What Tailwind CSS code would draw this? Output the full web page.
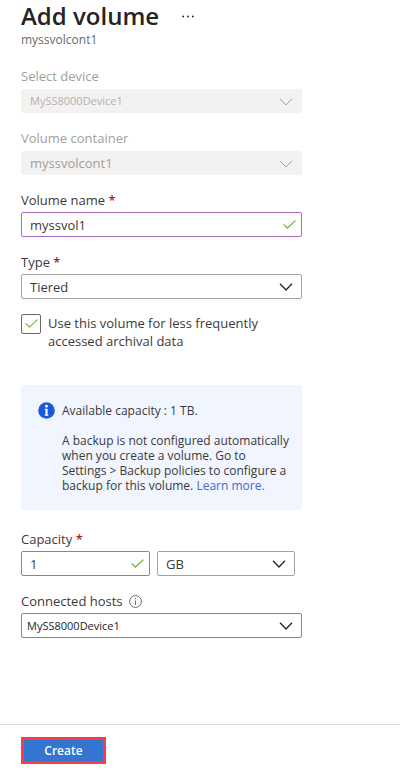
<!DOCTYPE html>
<html lang="en">
<head>
<meta charset="utf-8">
<meta name="viewport" content="width=device-width, initial-scale=1">
<title>Add volume</title>
<script src="https://cdn.jsdelivr.net/npm/@tailwindcss/browser@4"></script>
</head>
<body class="flex min-h-screen flex-col bg-white font-['Open_Sans','Noto_Sans',sans-serif] text-[13px] leading-5 text-[#3b3a39]">
<header class="px-[21px]">
  <div class="flex items-center gap-[23px]">
    <h1 class="text-2xl leading-8 font-semibold text-[#252423]">Add volume</h1>
    <button type="button" aria-label="More actions" class="flex h-5 items-center text-[#252423]">
      <svg class="h-[3px] w-3" viewBox="0 0 12 3" fill="currentColor"><circle cx="1.2" cy="1.5" r=".9"/><circle cx="6" cy="1.5" r=".9"/><circle cx="10.8" cy="1.5" r=".9"/></svg>
    </button>
  </div>
  <p class="text-xs leading-4 text-[#6b6a68]">myssvolcont1</p>
</header>

<main class="px-[21px] pt-[18px]">
  <form id="volume" class="w-full max-w-[281px]">
    <div class="flex flex-col gap-[15px]">
      <div>
        <label for="device" class="block text-[#a19f9d]">Select device</label>
        <div class="relative mt-[3px]">
          <select id="device" disabled class="block h-6 w-full appearance-none rounded-xs bg-[#f3f2f1] px-[9px] text-[11px] text-[#b3b0ad] opacity-100"><option>MySS8000Device1</option></select>
          <svg class="pointer-events-none absolute top-[9px] right-[9px] h-2 w-[14px] text-[#a19f9d]" viewBox="0 0 14 8" fill="none" stroke="currentColor"><path d="M1 .8 7 7 13 .8"/></svg>
        </div>
      </div>
      <div>
        <label for="container" class="block text-[#a19f9d]">Volume container</label>
        <div class="relative mt-[3px]">
          <select id="container" disabled class="block h-6 w-full appearance-none rounded-xs bg-[#f3f2f1] px-[9px] text-[#a19f9d] opacity-100"><option>myssvolcont1</option></select>
          <svg class="pointer-events-none absolute top-[9px] right-[9px] h-2 w-[14px] text-[#a19f9d]" viewBox="0 0 14 8" fill="none" stroke="currentColor"><path d="M1 .8 7 7 13 .8"/></svg>
        </div>
      </div>
      <div>
        <label for="name" class="block">Volume name <span class="font-semibold text-[#a4262c]">*</span></label>
        <div class="relative mt-[2px]">
          <input id="name" type="text" value="myssvol1" class="block h-[25px] w-full rounded-xs border border-[#a56cc1] bg-white px-2">
          <svg class="pointer-events-none absolute top-2 right-[6px] h-[9px] w-[13px] text-[#6bb03c]" viewBox="0 0 13 9" fill="none" stroke="currentColor" stroke-width="1.3"><path d="M.6 4.4 4.4 8.1 12.4.6"/></svg>
        </div>
      </div>
      <div>
        <label for="type" class="block">Type <span class="font-semibold text-[#a4262c]">*</span></label>
        <div class="relative mt-[2px]">
          <select id="type" class="block h-[25px] w-full appearance-none rounded-xs border border-[#a3a2a0] bg-white px-2"><option>Tiered</option></select>
          <svg class="pointer-events-none absolute top-[9px] right-[9px] h-2 w-[14px] text-[#252423]" viewBox="0 0 14 8" fill="none" stroke="currentColor" stroke-width="1.3"><path d="M1 .8 7 7 13 .8"/></svg>
        </div>
      </div>
      <div class="flex items-start gap-[7px]">
        <div class="relative shrink-0">
          <input id="archival" type="checkbox" checked class="block h-5 w-5 appearance-none rounded-xs border border-[#6b6a68] bg-white">
          <svg class="pointer-events-none absolute top-[5px] left-1 h-[9px] w-[13px] text-[#6bb03c]" viewBox="0 0 13 9" fill="none" stroke="currentColor" stroke-width="1.1"><path d="M.6 4.4 4.4 8.1 12.4.6"/></svg>
        </div>
        <label for="archival" class="leading-[18px]">Use this volume for less frequently<br>accessed archival data</label>
      </div>
    </div>

    <section class="mt-[35px] flex items-start gap-[7px] rounded-xs bg-[#f0f5ff] py-[17px] pr-2 pl-[17px] text-xs leading-[15px]">
      <svg class="h-[17px] w-[17px] shrink-0" viewBox="0 0 17 17"><circle cx="8.5" cy="8.5" r="8.3" fill="#1b5adb"/><circle cx="8.5" cy="4.2" r="1.4" fill="#fff"/><path d="M6.8 6.7h2.8v6h.8v1.1H6.6v-1.1h.9V7.8h-.7z" fill="#fff"/></svg>
      <div class="pt-px">
        <p>Available capacity : 1 TB.</p>
        <p class="mt-[15px]">A backup is not configured automatically<br>when you create a volume. Go to<br>Settings &gt; Backup policies to configure a<br>backup for this volume. <a href="#" class="text-[#4668c5]">Learn more.</a></p>
      </div>
    </section>

    <div class="mt-[19px]">
      <label for="capacity" class="block">Capacity <span class="font-semibold text-[#a4262c]">*</span></label>
      <div class="mt-[2px] flex gap-[7px] pr-[7px]">
        <div class="relative flex-[129]">
          <input id="capacity" type="text" value="1" class="block h-[25px] w-full rounded-xs border border-[#a56cc1] bg-white px-2">
          <svg class="pointer-events-none absolute top-2 right-[6px] h-[9px] w-[13px] text-[#6bb03c]" viewBox="0 0 13 9" fill="none" stroke="currentColor" stroke-width="1.3"><path d="M.6 4.4 4.4 8.1 12.4.6"/></svg>
        </div>
        <div class="relative flex-[138]">
          <select aria-label="Capacity unit" class="block h-[25px] w-full appearance-none rounded-xs border border-[#a3a2a0] bg-white px-2"><option>GB</option></select>
          <svg class="pointer-events-none absolute top-[9px] right-[9px] h-2 w-[14px] text-[#252423]" viewBox="0 0 14 8" fill="none" stroke="currentColor" stroke-width="1.3"><path d="M1 .8 7 7 13 .8"/></svg>
        </div>
      </div>
    </div>
    <div class="mt-[15px]">
      <div class="flex items-center gap-[6px]">
        <label for="hosts">Connected hosts</label>
        <svg class="h-[13px] w-[13px] text-[#6b6a68]" viewBox="0 0 13 13" fill="none" stroke="currentColor"><circle cx="6.5" cy="6.5" r="5.9"/><path d="M6.5 5.5V10M6.5 3v1.2"/></svg>
      </div>
      <div class="relative mt-[2px]">
        <select id="hosts" class="block h-[25px] w-full appearance-none rounded-xs border border-[#a56cc1] bg-white px-[5px] text-[11px] text-[#252423]"><option>MySS8000Device1</option></select>
        <svg class="pointer-events-none absolute top-[9px] right-[9px] h-2 w-[14px] text-[#252423]" viewBox="0 0 14 8" fill="none" stroke="currentColor" stroke-width="1.3"><path d="M1 .8 7 7 13 .8"/></svg>
      </div>
    </div>
  </form>
</main>

<footer class="mt-auto border-t border-[#dcdbda] px-[21px] pt-3 pb-[9px]">
  <button type="submit" form="volume" class="block h-[27px] w-[85px] border-3 border-[#fb3d41] bg-[#3276d2] text-xs leading-5 font-semibold text-white">Create</button>
</footer>
</body>
</html>
